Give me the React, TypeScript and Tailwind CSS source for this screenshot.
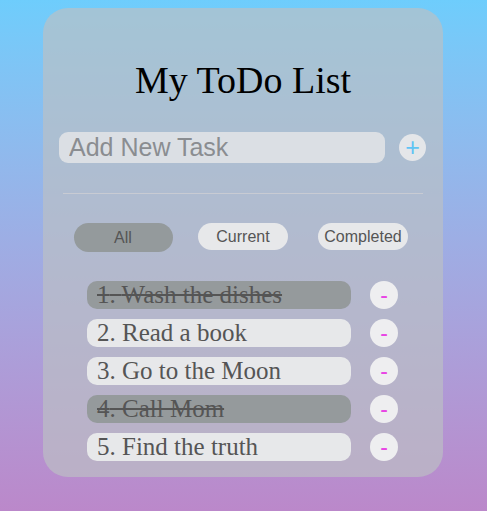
import { useState } from "react";

type Task = { id: number; text: string; done: boolean };

const TASKS: Task[] = [
  { id: 1, text: "Wash the dishes", done: true },
  { id: 2, text: "Read a book", done: false },
  { id: 3, text: "Go to the Moon", done: false },
  { id: 4, text: "Call Mom", done: true },
  { id: 5, text: "Find the truth", done: false },
];

const FILTERS = ["All", "Current", "Completed"] as const;
type Filter = (typeof FILTERS)[number];

export default function App() {
  const [tasks, setTasks] = useState<Task[]>(TASKS);
  const [filter, setFilter] = useState<Filter>("All");
  const [draft, setDraft] = useState("");

  const visible = tasks.filter((t) =>
    filter === "All" ? true : filter === "Current" ? !t.done : t.done
  );

  const add = () => {
    if (!draft.trim()) return;
    setTasks((ts) => [...ts, { id: Date.now(), text: draft.trim(), done: false }]);
    setDraft("");
  };

  return (
    <div className="min-h-screen bg-gradient-to-b from-[#6ecdfc] to-[#bb88ca] pt-[8px] pb-[34px]">
      <div className="ml-[43px] w-[400px] rounded-[25px] bg-[rgba(188,192,196,0.67)] pb-[16px]">
        <h1 className="pt-[50px] text-center font-['Liberation_Serif',serif] text-[38px] leading-[44px] text-black">
          My ToDo List
        </h1>

        <div className="mt-[30px] flex items-center gap-[14px] pl-[16px] pr-[17px]">
          <input
            value={draft}
            onChange={(e) => setDraft(e.target.value)}
            placeholder="Add New Task"
            className="h-[31px] w-[326px] rounded-[9px] bg-[#dbdfe4] px-[10px] font-['Liberation_Sans',Arial,sans-serif] text-[25px] text-[#555] placeholder:text-[#8a8d91] focus:outline-none"
          />
          <button
            onClick={add}
            className="flex h-[27px] w-[27px] items-center justify-center rounded-full bg-[#e4e6e9] font-['Liberation_Sans',Arial,sans-serif] text-[25px] leading-none text-[#60c4f4]"
          >
            +
          </button>
        </div>

        <hr className="mx-[20px] mt-[30px] border-t border-[#c8cbd3]" />

        <div className="mt-[29px] grid grid-cols-3 px-[20px]">
          {FILTERS.map((f) => (
            <div key={f} className="flex justify-center">
              <button
                onClick={() => setFilter(f)}
                className={
                  f === "All"
                    ? "h-[29px] w-[99px] rounded-[15px] font-['Liberation_Sans',Arial,sans-serif] text-[16px] text-[#555] " +
                      (filter === f ? "bg-[#949a9c]" : "bg-[#e7e8ea]")
                    : "h-[27px] w-[90px] rounded-[14px] font-['Liberation_Sans',Arial,sans-serif] text-[16px] text-[#555] " +
                      (filter === f ? "bg-[#949a9c]" : "bg-[#e7e8ea]")
                }
              >
                {f}
              </button>
            </div>
          ))}
        </div>

        <ul className="mt-[29px] flex flex-col gap-[10px] pr-[1px]">
          {visible.map((t, i) => (
            <li key={t.id} className="flex items-center justify-center gap-[19px]">
              <div
                onClick={() =>
                  setTasks((ts) => ts.map((x) => (x.id === t.id ? { ...x, done: !x.done } : x)))
                }
                className={
                  "h-[28px] w-[264px] cursor-pointer rounded-[10px] pl-[10px] font-['Liberation_Serif',serif] text-[25px] leading-[28px] text-[#555] " +
                  (t.done ? "bg-[#959a9c] line-through" : "bg-[#e7e8ea]")
                }
              >
                {i + 1}. {t.text}
              </div>
              <button
                onClick={() => setTasks((ts) => ts.filter((x) => x.id !== t.id))}
                className="flex h-[28px] w-[28px] items-center justify-center rounded-full bg-[#eeeef0] font-['Liberation_Sans',Arial,sans-serif] text-[23px] leading-none text-[#e845e4]"
              >
                -
              </button>
            </li>
          ))}
        </ul>
      </div>
    </div>
  );
}
